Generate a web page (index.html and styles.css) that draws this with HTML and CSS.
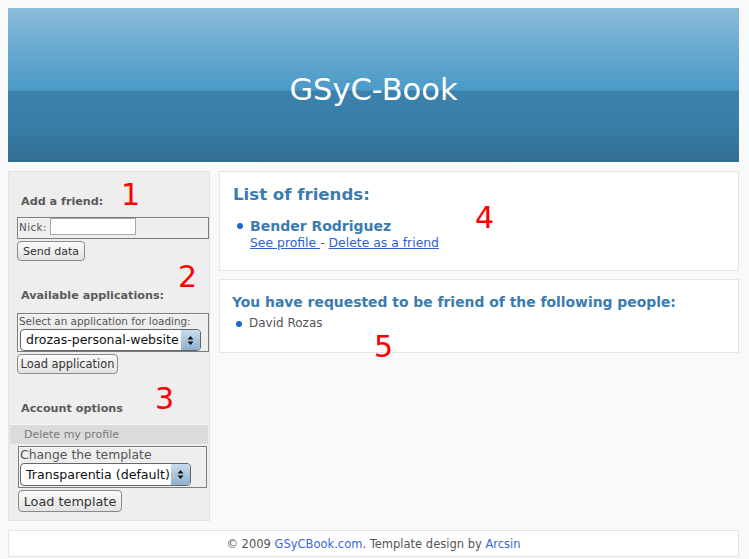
FILE: index.html
```html
<!DOCTYPE html>
<html>
<head>
<meta charset="utf-8">
<title>GSyC-Book</title>
<link rel="stylesheet" href="styles.css">
</head>
<body>
<div class="page">
  <header class="header"><h1 class="title">GSyC-Book</h1></header>
  <div class="main">
    <aside class="sidebar">
      <h3 class="side-h first">Add a friend:</h3>
      <fieldset class="fs fs-nick">
        <label class="nick-label">Nick:</label>
        <span class="input"></span>
      </fieldset>
      <button class="btn btn-send">Send data</button>

      <h3 class="side-h second">Available applications:</h3>
      <fieldset class="fs fs-app">
        <div class="small-label">Select an application for loading:</div>
        <div class="select sel-app"><span class="val">drozas-personal-website</span><span class="arrow"><svg width="7" height="11" viewBox="0 0 7 11"><path d="M3.5 1 L6.5 4.5 L0.5 4.5 Z M3.5 10 L6.5 6.5 L0.5 6.5 Z" fill="#111"/></svg></span></div>
      </fieldset>
      <button class="btn btn-app">Load application</button>

      <h3 class="side-h third">Account options</h3>
      <div class="delete-row">Delete my profile</div>
      <fieldset class="fs fs-tpl">
        <div class="tpl-label">Change the template</div>
        <div class="select sel-tpl"><span class="val">Transparentia (default)</span><span class="arrow"><svg width="7" height="11" viewBox="0 0 7 11"><path d="M3.5 1 L6.5 4.5 L0.5 4.5 Z M3.5 10 L6.5 6.5 L0.5 6.5 Z" fill="#111"/></svg></span></div>
      </fieldset>
      <button class="btn btn-tpl">Load template</button>
    </aside>
    <section class="content">
      <div class="box box-friends">
        <h2 class="box-h">List of friends:</h2>
        <ul class="list">
          <li class="friend">
            <div class="friend-name">Bender Rodriguez</div>
            <div class="friend-links"><a href="#">See profile </a> - <a href="#">Delete as a friend</a></div>
          </li>
        </ul>
      </div>
      <div class="box box-req">
        <h2 class="box-h2">You have requested to be friend of the following people:</h2>
        <ul class="list">
          <li class="req">David Rozas</li>
        </ul>
      </div>
    </section>
  </div>
  <footer class="footer">© 2009 <a href="#">GSyCBook.com</a>. Template design by <a href="#">Arcsin</a></footer>
</div>
<div class="notes">
  <span class="num n1">1</span>
  <span class="num n2">2</span>
  <span class="num n3">3</span>
  <span class="num n4">4</span>
  <span class="num n5">5</span>
</div>
</body>
</html>
```
FILE: styles.css
```css
html, body {
  margin: 0;
  padding: 0;
}
body {
  background: #f9f9f9;
  font-family: "DejaVu Sans", "Noto Sans", sans-serif;
  color: #555;
  padding: 8px;
}
.page {
  width: 731px;
}
.header {
  height: 154px;
  box-sizing: border-box;
  padding-top: 67px;
  background: linear-gradient(to bottom, #8bbcda 0px, #6aaad0 40px, #4b9ac8 82px, #3a81ab 83px, #3880a9 110px, #336f94 154px);
}
.title {
  margin: 0;
  font-size: 30.5px;
  line-height: 30px;
  font-weight: normal;
  color: #fff;
  text-align: center;
}
.main {
  display: flex;
  align-items: flex-start;
  gap: 9px;
  margin-top: 9px;
}
.sidebar {
  width: 202px;
  box-sizing: border-box;
  background: #eeeeee;
  border: 1px solid #e2e2e2;
  padding-bottom: 8px;
  display: flex;
  flex-direction: column;
  align-items: flex-start;
}
.side-h {
  margin: 0 0 0 12px;
  font-size: 11.2px;
  line-height: 14px;
  font-weight: bold;
  color: #5a5a5a;
}
.side-h.first { margin-top: 23px; }
.side-h.second { margin-top: 28px; }
.side-h.third { margin-top: 28px; }
.fs {
  margin: 0;
  padding: 0;
  min-width: 0;
  border: 1px solid #7c7c7c;
  box-shadow: inset 1px 1px 0 #f8f8f8;
  box-sizing: border-box;
  background: #eeeeee;
}
.fs-nick {
  margin: 8px 0 0 8px;
  width: 192px;
  height: 22px;
  display: flex;
  align-items: center;
  padding-left: 1px;
}
.nick-label {
  font-size: 10.4px;
  letter-spacing: 0.4px;
  color: #555;
  width: 31px;
}
.input {
  display: block;
  width: 86px;
  height: 17px;
  box-sizing: border-box;
  background: #fff;
  border: 1px solid #a8a8a8;
}
.btn {
  font-family: "DejaVu Sans", sans-serif;
  color: #333;
  background: linear-gradient(to bottom, #fbfbfb, #e3e3e3);
  border: 1px solid #8a8a8a;
  border-radius: 4px;
  padding: 0;
  box-sizing: border-box;
  margin: 0;
}
.btn-send {
  margin: 2px 0 0 8px;
  width: 68px;
  height: 20px;
  font-size: 11px;
}
.btn-app {
  margin: 2px 0 0 8px;
  width: 101px;
  height: 20px;
  font-size: 11.4px;
}
.btn-tpl {
  margin: 2px 0 0 9px;
  width: 104px;
  height: 22px;
  font-size: 12.8px;
}
.fs-app {
  margin: 10px 0 0 8px;
  width: 192px;
  height: 39px;
  padding: 1px 0 0 1px;
}
.small-label {
  font-size: 10.4px;
  line-height: 13px;
  color: #555;
  white-space: nowrap;
}
.select {
  display: flex;
  box-sizing: border-box;
  border: 1px solid #666;
  border-radius: 4px;
  background: #fff;
  overflow: hidden;
  color: #111;
}
.select .val {
  flex: 1;
  white-space: nowrap;
  padding-left: 5px;
  overflow: visible;
}
.select .arrow {
  width: 19px;
  flex: none;
  background: linear-gradient(to bottom, #c9dced, #8eb0ce);
  display: flex;
  align-items: center;
  justify-content: center;
}
.sel-app {
  margin: 1px 0 0 1px;
  width: 181px;
  height: 22px;
  line-height: 20px;
  font-size: 12.5px;
}
.delete-row {
  margin: 8px 0 0 1px;
  width: 198px;
  height: 20px;
  box-sizing: border-box;
  background: #dcdcdc;
  border-top: 1px solid #f6f6f6;
  font-size: 11px;
  line-height: 19px;
  color: #7a7a7a;
  padding-left: 14px;
}
.fs-tpl {
  margin: 2px 0 0 9px;
  width: 189px;
  height: 42px;
  padding: 0 0 0 1px;
}
.tpl-label {
  font-size: 12.4px;
  line-height: 16px;
  color: #555;
  white-space: nowrap;
}
.sel-tpl {
  width: 171px;
  height: 23px;
  line-height: 21px;
  font-size: 12.6px;
}
.content {
  flex: 1;
  display: flex;
  flex-direction: column;
  gap: 8px;
}
.box {
  background: #fff;
  border: 1px solid #e6e6e6;
  box-sizing: border-box;
}
.box-friends {
  height: 100px;
  padding: 13px 0 0 13px;
}
.box-req {
  height: 74px;
  padding: 14px 0 0 12px;
}
.box-h {
  margin: 0;
  font-size: 16.6px;
  line-height: 20px;
  font-weight: bold;
  color: #3a7bb0;
}
.box-h2 {
  margin: 0;
  font-size: 13.9px;
  line-height: 17px;
  font-weight: bold;
  color: #3a7bb0;
}
.list {
  list-style: none;
  margin: 0;
  padding: 0 0 0 17px;
}
.list li {
  position: relative;
}
.list li::before {
  content: "";
  position: absolute;
  left: -13px;
  width: 6px;
  height: 6px;
  border-radius: 50%;
  background: #1c66c9;
}
.friend {
  margin-top: 13px;
}
.friend::before {
  top: 5px;
}
.friend-name {
  font-size: 14px;
  line-height: 16px;
  font-weight: bold;
  color: #3a7bb0;
}
.friend-links {
  font-size: 12.4px;
  line-height: 15px;
  margin-top: 1px;
  color: #555;
}
.friend-links a {
  color: #2f5fd0;
}
.req {
  margin-top: 5px;
  font-size: 12px;
  line-height: 15px;
  color: #555;
}
.req::before {
  top: 5px;
}
.footer {
  margin-top: 9px;
  background: #fff;
  border: 1px solid #e6e6e6;
  height: 27px;
  box-sizing: border-box;
  padding-top: 6px;
  font-size: 11.5px;
  line-height: 15px;
  text-align: center;
  color: #555;
}
.footer a {
  color: #3a66d8;
  text-decoration: none;
}
.notes {
  position: absolute;
  top: 0;
  left: 0;
}
.num {
  position: absolute;
  font-family: "DejaVu Sans", sans-serif;
  font-size: 30px;
  line-height: 30px;
  color: #ff0000;
}
.n1 { left: 121px; top: 180px; }
.n2 { left: 178px; top: 262px; }
.n3 { left: 155px; top: 384px; }
.n4 { left: 475px; top: 203px; }
.n5 { left: 374px; top: 332px; }
```
